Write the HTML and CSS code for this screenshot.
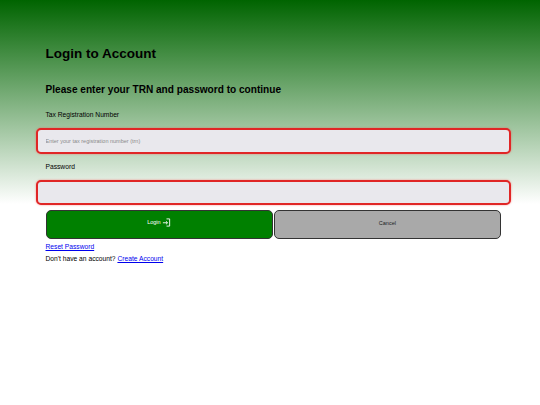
FILE: index.html
```html
<!DOCTYPE html>
<html lang="en">
<head>
    <meta charset="UTF-8">
    <meta name="viewport" content="width=device-width, initial-scale=1.0">
    <title>Login to Account</title>
    <link rel="stylesheet" href="styles.css">
</head>
<body>
    <div class="container">
        <h1>Login to Account</h1>
        <h2>Please enter your TRN and password to continue</h2>

        <label for="trn">Tax Registration Number</label>
        <input type="text" id="trn" placeholder="Enter your tax registration number (trn)">

        <label for="password" class="password-label">Password</label>
        <input type="password" id="password">

        <div class="buttons">
            <button type="button" class="login-btn">
                Login
                <svg class="login-icon" viewBox="0 0 10 10" width="9" height="9" aria-hidden="true">
                    <path d="M5 1H8.5V9H5M1 5.3H6M4.4 3.6L6.2 5.3L4.4 7" fill="none" stroke="currentColor" stroke-width="1"/>
                </svg>
            </button>
            <button type="button" class="cancel-btn">Cancel</button>
        </div>

        <div class="links">
            <a href="#">Reset Password</a>
        </div>
        <div class="links">
            Don't have an account? <a href="#">Create Account</a>
        </div>
    </div>
</body>
</html>
```

FILE: styles.css
```css
html {
    background-color: #fff;
}

body {
    font-family: "Liberation Sans", Arial, sans-serif;
    margin: 0;
    padding: 0;
    min-height: 405px;
    background: linear-gradient(to bottom, #006400, #fff) no-repeat;
    background-size: 100% 204px;
    color: #000;
}

.container {
    display: flex;
    flex-direction: column;
    padding: 45px 39px 0 45.5px;
}

h1 {
    margin: 0;
    font-size: 13.5px;
    line-height: 17px;
}

h2 {
    margin: 21px 0 0;
    font-size: 10.1px;
    line-height: 13px;
}

label {
    margin-top: 14px;
    font-size: 6.7px;
    line-height: 9px;
}

.password-label {
    margin-top: 8px;
}

input {
    box-sizing: border-box;
    width: 475px;
    height: 25.5px;
    margin: 9px 0 0 -9.5px;
    padding: 0 7.5px;
    background-color: #e9e8ed;
    border: 2px solid #e02626;
    border-radius: 5px;
    box-shadow: 0 0 2px rgba(255, 60, 60, 0.6);
    font-family: inherit;
    font-size: 5.5px;
    outline: none;
}

input::placeholder {
    color: #8a8a8a;
}

.buttons {
    display: flex;
    gap: 1px;
    margin-top: 5px;
}

button {
    flex: 1;
    height: 28.5px;
    padding: 0 0 3px;
    border: 1px solid #333;
    border-radius: 5px;
    font-family: inherit;
    font-size: 5.5px;
    cursor: pointer;
}

.login-btn {
    background-color: #008000;
    color: #fff;
}

.login-icon {
    vertical-align: middle;
    margin-left: 0;
}

.cancel-btn {
    background-color: #a9a9a9;
    color: #222;
}

.links {
    margin-top: 4px;
    font-size: 6.7px;
    line-height: 8px;
}
```
